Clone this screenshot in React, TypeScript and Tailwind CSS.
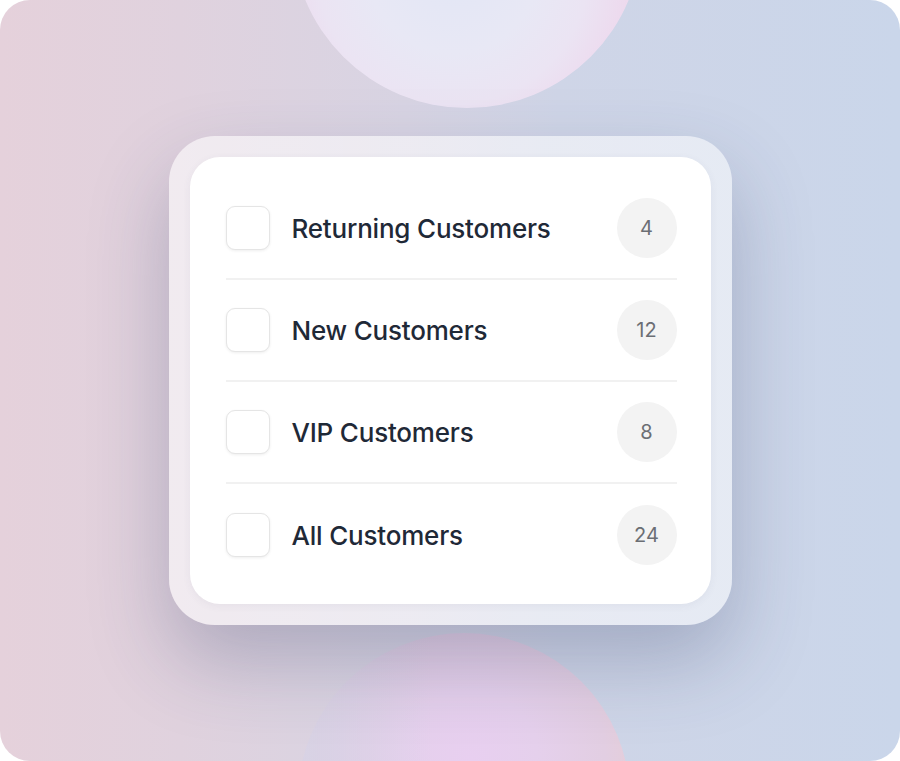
import React from 'react';

interface Segment {
  id: string;
  label: string;
  count: number;
}

const segments: Segment[] = [
  { id: 'returning', label: 'Returning Customers', count: 4 },
  { id: 'new', label: 'New Customers', count: 12 },
  { id: 'vip', label: 'VIP Customers', count: 8 },
  { id: 'all', label: 'All Customers', count: 24 },
];

const SegmentRow: React.FC<{ segment: Segment; last: boolean }> = ({ segment, last }) => (
  <div
    className={`flex items-center h-[102px] ${last ? '' : 'border-b-2 border-[#f1f1f1]'}`}
  >
    <div className="w-11 h-11 shrink-0 rounded-[9px] border border-[#e5e5e5] bg-white shadow-[0_1px_3px_rgba(0,0,0,0.07)]" />
    <span className="ml-[22px] flex-1 text-[26px] font-medium text-[#1f2937] tracking-[-0.2px]">
      {segment.label}
    </span>
    <div className="w-[60px] h-[60px] shrink-0 rounded-full bg-[#f3f3f3] flex items-center justify-center text-[20px] text-[#6b6e74]">
      {segment.count}
    </div>
  </div>
);

export default function App() {
  return (
    <div
      className="relative w-[900px] h-[761px] overflow-hidden rounded-[30px] flex items-center justify-center bg-[linear-gradient(90deg,#e5d1db_0%,#e0d2de_20%,#d8d4e3_45%,#cfd5e7_62%,#cad6ea_100%)]"
      style={{ fontFamily: 'Inter, "Noto Sans", sans-serif' }}
    >
      {/* decorative spheres */}
      <div className="absolute left-[292px] top-[-242px] w-[350px] h-[350px] rounded-full blur-[0.5px] bg-[radial-gradient(circle_at_46%_60%,#e2e6f5_0%,#e8e8f5_30%,#ebe4f3_48%,#eddaee_62%,#efd0dc_78%,#f0c8c6_100%)]" />
      <div className="absolute left-[298px] top-[633px] w-[332px] h-[332px] rounded-full blur-[0.5px] bg-[linear-gradient(90deg,rgba(212,212,232,0.8)_0%,rgba(212,212,232,0)_40%),radial-gradient(circle_at_52%_38%,#e8cff0_0%,#e5d0ec_25%,#e2cee2_50%,#e6cdd2_70%,#ebccbf_100%)]" />

      {/* card */}
      <div className="relative w-[563px] h-[489px] rounded-[46px] p-[21px] bg-[linear-gradient(90deg,rgba(255,255,255,0.55),rgba(255,255,255,0.5))] shadow-[0_36px_80px_rgba(50,60,100,0.28)]">
        <div className="w-full h-full rounded-[30px] bg-white pt-[21px] pb-[17px] pl-[36px] pr-[34px] flex flex-col shadow-[0_2px_8px_rgba(60,70,110,0.06)]">
          {segments.map((s, i) => (
            <SegmentRow key={s.id} segment={s} last={i === segments.length - 1} />
          ))}
        </div>
      </div>
    </div>
  );
}
